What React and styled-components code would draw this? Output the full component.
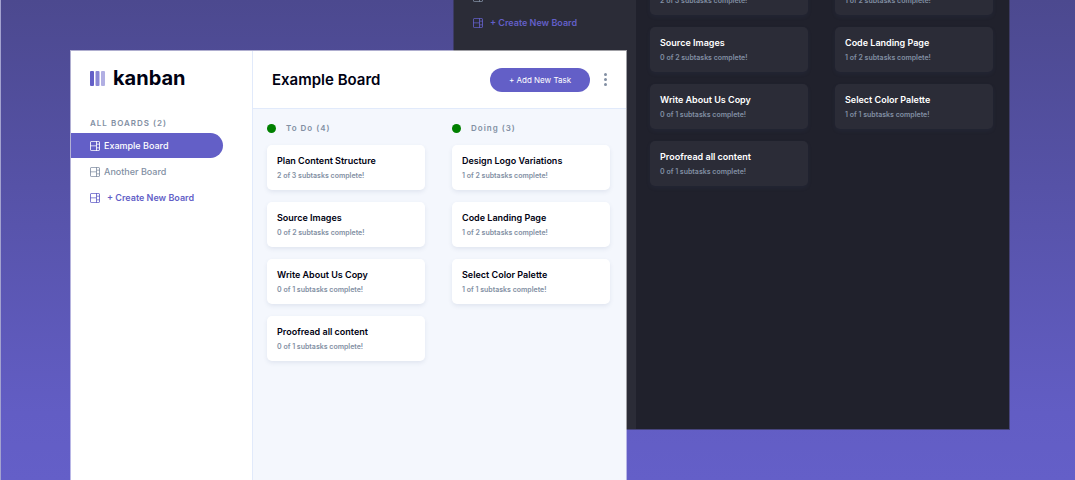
import React from "react";
import styled, { createGlobalStyle, ThemeProvider } from "styled-components";

const GlobalStyle = createGlobalStyle`
  * { box-sizing: border-box; }
  body { margin: 0; font-family: Inter, "Liberation Sans", sans-serif; }
  h1, h2, h3, p, ul { margin: 0; padding: 0; }
  ul { list-style: none; }
  button { border: 0; padding: 0; background: none; font-family: inherit; cursor: pointer; }
`;

const light = {
  panel: "#ffffff",
  canvas: "#f4f7fd",
  line: "#e1eafb",
  text: "#000112",
  muted: "#828fa3",
  accent: "#635fc7",
  edge: "rgba(255, 255, 255, 0.55)",
  shadow: "rgba(54, 78, 126, 0.1)",
};

const dark = {
  panel: "#2b2c37",
  canvas: "#20212c",
  line: "#2b2c37",
  text: "#ffffff",
  muted: "#828fa3",
  accent: "#635fc7",
  edge: "rgba(43, 44, 55, 0.5)",
  shadow: "rgba(54, 78, 126, 0.1)",
};

const Scene = styled.main`
  position: relative;
  min-height: 100vh;
  overflow: hidden;
  border-left: 1px solid #a3a2cf;
  background: linear-gradient(#4c498f 0%, #625dc4 86%, #645fc8 100%);
`;

/* The two windows overlap on the canvas. */
const Window = styled.section`
  position: absolute;
  display: flex;
  border: 1px solid ${(p) => p.theme.edge};
  background: ${(p) => p.theme.canvas};
  background-clip: padding-box;
  color: ${(p) => p.theme.text};
`;

const BackWindow = styled(Window)`
  top: -125px;
  bottom: 50px;
  left: 452px;
  right: 65px;
`;

const FrontWindow = styled(Window)`
  top: 50px;
  bottom: -1px;
  left: 69px;
  right: 448px;
`;

const Sidebar = styled.aside`
  flex: 0 0 182px;
  border-right: 1px solid ${(p) => p.theme.line};
  background: ${(p) => p.theme.panel};
`;

const Brand = styled.div`
  display: flex;
  align-items: center;
  gap: 8px;
  padding: 13px 0 0 19px;
  font-size: 20px;
  font-weight: 700;
  line-height: 28px;
`;

const BoardsLabel = styled.h2`
  padding: 25px 0 4px 19px;
  color: ${(p) => p.theme.muted};
  font-size: 8px;
  font-weight: 600;
  line-height: 12px;
  letter-spacing: 1px;
`;

const Nav = styled.nav`
  display: grid;
  gap: 1px;
`;

const NavButton = styled.button`
  display: flex;
  align-items: center;
  gap: ${(p) => (p.$create ? 7 : 4)}px;
  width: 152px;
  height: 25px;
  padding-left: 19px;
  border-radius: 0 13px 13px 0;
  font-size: 9px;
  font-weight: ${(p) => (p.$create ? 600 : 500)};
  white-space: nowrap;
  color: ${(p) => (p.$active ? "#ffffff" : p.$create ? p.theme.accent : p.theme.muted)};
  background: ${(p) => (p.$active ? p.theme.accent : "transparent")};
`;

const Main = styled.div`
  flex: 1;
  min-width: 0;
`;

const Header = styled.header`
  display: flex;
  align-items: center;
  height: 58px;
  padding: 0 16px 0 19px;
  border-bottom: 1px solid ${(p) => p.theme.line};
  background: ${(p) => p.theme.panel};
`;

const Title = styled.h1`
  flex: 1;
  font-size: 15px;
  font-weight: 600;
  line-height: 20px;
  white-space: nowrap;
`;

const AddButton = styled.button`
  width: 100px;
  height: 24px;
  border-radius: 12px;
  background: ${(p) => p.theme.accent};
  color: #ffffff;
  font-size: 8px;
  font-weight: 400;
`;

const MenuButton = styled.button`
  display: flex;
  justify-content: center;
  width: 9px;
  margin-left: 11px;
  color: ${(p) => p.theme.muted};
`;

const Columns = styled.div`
  display: grid;
  grid-template-columns: 1fr 1fr;
  gap: 27px;
  padding: 12px 16px 14px 14px;
`;

const ColumnTitle = styled.h2`
  display: flex;
  align-items: center;
  gap: 10px;
  margin-bottom: 10px;
  color: ${(p) => p.theme.muted};
  font-size: 8px;
  font-weight: 600;
  line-height: 14px;
  letter-spacing: 1px;
`;

const Dot = styled.span`
  width: 9px;
  height: 9px;
  border-radius: 50%;
  background: #008000;
`;

const CardList = styled.ul`
  display: grid;
  gap: 12px;
`;

const Card = styled.li`
  height: 45px;
  padding: 9px 10px;
  border-radius: 5px;
  background: ${(p) => p.theme.panel};
  box-shadow: 0 2px 4px ${(p) => p.theme.shadow};
  white-space: nowrap;
`;

const CardTitle = styled.h3`
  font-size: 9px;
  font-weight: 600;
  line-height: 14px;
`;

const CardNote = styled.p`
  padding-top: 1px;
  color: ${(p) => p.theme.muted};
  font-size: 7px;
  font-weight: 600;
  line-height: 14px;
`;

const BoardIcon = () => (
  <svg width="10" height="10" viewBox="0 0 16 16" fill="currentColor" aria-hidden="true">
    <path d="M0 2.889A2.889 2.889 0 0 1 2.889 0H13.11A2.889 2.889 0 0 1 16 2.889V13.11A2.888 2.888 0 0 1 13.111 16H2.89A2.889 2.889 0 0 1 0 13.111V2.89Zm1.333 5.555v4.667c0 .859.697 1.556 1.556 1.556h6.889V8.444H1.333Zm8.445-1.333V1.333h-6.89A1.556 1.556 0 0 0 1.334 2.89V7.11h8.445Zm4.889-1.333H11.11v4.444h3.556V5.778Zm0 5.778H11.11v3.11h2a1.556 1.556 0 0 0 1.556-1.555v-1.555Zm0-7.112V2.89a1.555 1.555 0 0 0-1.556-1.556h-2v3.111h3.556Z" />
  </svg>
);

const LogoMark = () => (
  <svg width="15" height="15" viewBox="0 0 15 15" fill="#635fc7" aria-hidden="true">
    <rect width="4" height="15" rx="1" />
    <rect x="5.5" width="4" height="15" rx="1" opacity="0.75" />
    <rect x="11" width="4" height="15" rx="1" opacity="0.5" />
  </svg>
);

const DotsIcon = () => (
  <svg width="3" height="13" viewBox="0 0 3 13" fill="currentColor" aria-hidden="true">
    <circle cx="1.5" cy="1.5" r="1.5" />
    <circle cx="1.5" cy="6.5" r="1.5" />
    <circle cx="1.5" cy="11.5" r="1.5" />
  </svg>
);

const columns = [
  {
    name: "To Do",
    tasks: [
      ["Plan Content Structure", "2 of 3"],
      ["Source Images", "0 of 2"],
      ["Write About Us Copy", "0 of 1"],
      ["Proofread all content", "0 of 1"],
    ],
  },
  {
    name: "Doing",
    tasks: [
      ["Design Logo Variations", "1 of 2"],
      ["Code Landing Page", "1 of 2"],
      ["Select Color Palette", "1 of 1"],
    ],
  },
];

const Board = () => (
  <>
    <Sidebar>
      <Brand>
        <LogoMark />
        <span>kanban</span>
      </Brand>
      <BoardsLabel>ALL BOARDS (2)</BoardsLabel>
      <Nav>
        <NavButton $active><BoardIcon />Example Board</NavButton>
        <NavButton><BoardIcon />Another Board</NavButton>
        <NavButton $create><BoardIcon />+ Create New Board</NavButton>
      </Nav>
    </Sidebar>
    <Main>
      <Header>
        <Title>Example Board</Title>
        <AddButton>+ Add New Task</AddButton>
        <MenuButton aria-label="Board options"><DotsIcon /></MenuButton>
      </Header>
      <Columns>
        {columns.map(({ name, tasks }) => (
          <section key={name}>
            <ColumnTitle><Dot />{name} ({tasks.length})</ColumnTitle>
            <CardList>
              {tasks.map(([title, done]) => (
                <Card key={title}>
                  <CardTitle>{title}</CardTitle>
                  <CardNote>{done} subtasks complete!</CardNote>
                </Card>
              ))}
            </CardList>
          </section>
        ))}
      </Columns>
    </Main>
  </>
);

export default function App() {
  return (
    <>
      <GlobalStyle />
      <Scene>
        <ThemeProvider theme={dark}>
          <BackWindow><Board /></BackWindow>
        </ThemeProvider>
        <ThemeProvider theme={light}>
          <FrontWindow><Board /></FrontWindow>
        </ThemeProvider>
      </Scene>
    </>
  );
}
